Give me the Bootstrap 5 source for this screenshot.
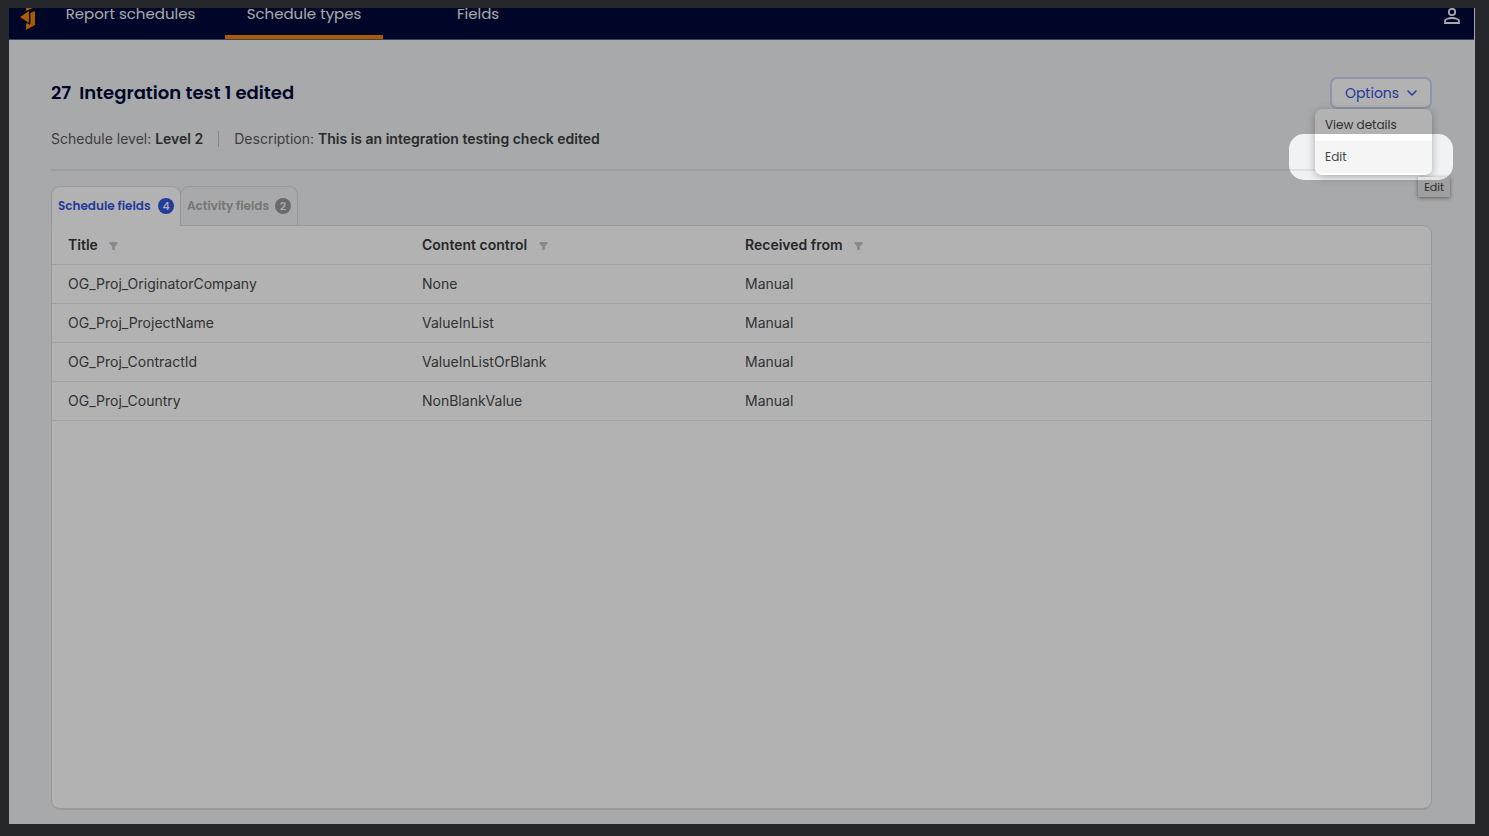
<!DOCTYPE html>
<html lang="en">
<head>
<meta charset="utf-8">
<meta name="viewport" content="width=device-width, initial-scale=1">
<title>Schedule types</title>
<link href="https://cdn.jsdelivr.net/npm/bootstrap@5.3.0/dist/css/bootstrap.min.css" rel="stylesheet">
<style>
  body { font-family: Inter, "Liberation Sans", sans-serif; font-size: 14px; line-height: 20px; color: #393a3c; background: #26272b; height: 100vh; padding: 8px 14px 12px 9px; }
  .app-frame { background: #f0f2f5; overflow: hidden; }
  .geo { font-family: Poppins, Inter, "Liberation Sans", sans-serif; }
  .topbar { background: #000a38; border-bottom: 1px solid #5a6280; margin-right: 1px; padding: 0 14px 0 11px; }
  .topbar .nav-link { color: #f0f2f5; font-size: 15px; line-height: 12px; height: 31px; padding: 0; border-bottom: 4px solid transparent; text-align: center; width: 158px; }
  .topbar .nav-link.active { border-bottom-color: #f08500; }
  .topbar .nav-link.first { width: 189px; }
  .topbar .nav-link.last { width: 190px; }
  .page-body { padding: 37px 43px 14px 42px; }
  h1 { font-size: 18px; line-height: 28px; font-weight: 600; color: #000a38; }
  .btn-options { height: 32px; width: 102px; padding: 0; border: 2px solid #ccd5fa; border-radius: 7px; background: #fff; color: #3355e0; font-size: 14px; line-height: 20px; font-weight: 400; }
  .btn-options:hover { background: #fff; color: #3355e0; border-color: #ccd5fa; }
  .options-menu { position: absolute; top: 32px; right: 0; width: 117px; min-width: 0; padding: 0 0 2px; border: 0; border-radius: 7px; background: #fff; overflow: hidden; box-shadow: 0 2px 8px rgba(0,0,0,.3); z-index: 2; }
  .options-menu .dropdown-item { font-size: 12px; line-height: 32px; padding: 0 10px; color: #444; }
  .options-menu .dropdown-item.hovered { background: #f5f5f5; }
  .hint { position: absolute; top: 100px; right: -18px; padding: 0 6px; font-size: 11px; line-height: 20px; color: #444; background: #e4e4e4; box-shadow: 0 1px 4px rgba(0,0,0,.45); z-index: 3; }
  .spotlight { position: absolute; top: 57px; right: -21px; width: 164px; height: 46px; border-radius: 15px; box-shadow: 0 0 0 3000px rgba(0,0,0,.3); pointer-events: none; z-index: 4; }
  .details { color: #59595c; margin-top: 20px; padding-bottom: 20px; border-bottom: 2px solid #dfe0e3; }
  .details strong { font-weight: 600; color: #3c3d40; }
  .details .first { padding-right: 15px; margin-right: 15px; border-right: 1px solid #bfc1c6; line-height: 16px; }
  .field-tabs { margin-top: 15px; margin-bottom: -1px; position: relative; z-index: 1; }
  .field-tabs .nav-link { height: 40px; border: 1px solid #d6d7db; border-bottom-color: #d9dadd; border-radius: 9px 9px 0 0; padding: 0 6px; font-size: 12px; font-weight: 600; color: #aaa; white-space: nowrap; }
  .field-tabs .nav-link.active { background: #fff; color: #3355e0; border-bottom-color: #fff; }
  .field-tabs .first-tab { width: 130px; }
  .field-tabs .second-tab { width: 118px; margin-left: -1px; }
  .count { width: 16px; height: 16px; border-radius: 50%; background: #999; color: #fff; font-size: 11px; line-height: 16px; text-align: center; font-weight: 500; }
  .active .count { background: #3355e0; }
  .panel { background: #fff; border: 1px solid #d9dadd; border-bottom-width: 2px; border-radius: 0 9px 9px 9px; }
  .panel .table { --bs-table-bg: transparent; --bs-table-color: #48494b; table-layout: fixed; color: #48494b; border-color: #e9e9ea; margin: 0; }
  .panel th, .panel td { height: 39px; padding: 0 16px; vertical-align: middle; }
  .panel th { height: 38px; font-weight: 600; color: #38393b; }
  .panel .btn-filter { border: 0; padding: 0; margin-left: 8px; line-height: 1; color: #c4c4c6; background: none; }
  .col-title { width: 354px; }
  .col-control { width: 323px; }
</style>
</head>
<body>
<div class="app-frame h-100 d-flex flex-column">
  <header class="topbar d-flex align-items-start justify-content-between flex-shrink-0 geo">
    <div class="d-flex">
      <a href="#" aria-label="Home" class="d-block lh-1">
        <svg width="16" height="23" viewBox="0 0 16 23" fill="#f08500"><path d="M6 0h7L6 3zM15 3v14l-9 5v-6l1-1 3 2V5zM0 9l9-6v12z"/><path d="M10 5v11" stroke="#000a38" stroke-width=".8"/></svg>
      </a>
      <nav class="nav flex-nowrap" aria-label="Main">
        <a class="nav-link first" href="#">Report schedules</a>
        <a class="nav-link active" href="#" aria-current="page">Schedule types</a>
        <a class="nav-link last" href="#">Fields</a>
      </nav>
    </div>
    <button type="button" class="btn p-0 border-0 lh-1 d-flex" aria-label="Account">
      <svg width="16" height="17" viewBox="0 0 16 17" fill="none" stroke="#f0f2f5" stroke-width="1.8"><circle cx="8" cy="4" r="3.2"/><path d="M1 15v-2c0-2 4-3 7-3s7 1 7 3v2z"/></svg>
    </button>
  </header>
  <main class="page-body d-flex flex-column flex-grow-1">
    <div class="d-flex justify-content-between align-items-center">
      <h1 class="geo m-0 d-flex gap-2"><span>27</span><span>Integration test 1 edited</span></h1>
      <div class="dropdown geo">
        <button type="button" class="btn btn-options d-flex align-items-center justify-content-center gap-2" aria-expanded="true">Options
          <svg width="10" height="6" viewBox="0 0 10 6" fill="none" stroke="currentColor" stroke-width="1.5" stroke-linecap="round" stroke-linejoin="round"><path d="M1 1l4 4 4-4"/></svg>
        </button>
        <div class="dropdown-menu options-menu show">
          <a class="dropdown-item" href="#">View details</a>
          <a class="dropdown-item hovered" href="#">Edit</a>
        </div>
        <div class="hint" role="tooltip">Edit</div>
        <div class="spotlight"></div>
      </div>
    </div>
    <div class="details d-flex align-items-center">
      <div class="first">Schedule level: <strong>Level 2</strong></div>
      <div>Description: <strong>This is an integration testing check edited</strong></div>
    </div>
    <nav class="nav field-tabs geo" aria-label="Field groups">
      <a class="nav-link active first-tab d-flex align-items-center justify-content-between" href="#">Schedule fields <span class="count">4</span></a>
      <a class="nav-link second-tab d-flex align-items-center justify-content-between" href="#">Activity fields <span class="count">2</span></a>
    </nav>
    <section class="panel flex-grow-1">
      <table class="table">
        <thead>
          <tr>
            <th scope="col" class="col-title">Title <button type="button" class="btn-filter" aria-label="Filter title"><svg width="9" height="8" viewBox="0 0 9 9" fill="currentColor"><path d="M0 0h9v2L6 5v4H3V5L0 2z"/></svg></button></th>
            <th scope="col" class="col-control">Content control <button type="button" class="btn-filter" aria-label="Filter content control"><svg width="9" height="8" viewBox="0 0 9 9" fill="currentColor"><path d="M0 0h9v2L6 5v4H3V5L0 2z"/></svg></button></th>
            <th scope="col">Received from <button type="button" class="btn-filter" aria-label="Filter received from"><svg width="9" height="8" viewBox="0 0 9 9" fill="currentColor"><path d="M0 0h9v2L6 5v4H3V5L0 2z"/></svg></button></th>
          </tr>
        </thead>
        <tbody>
          <tr><td>OG_Proj_OriginatorCompany</td><td>None</td><td>Manual</td></tr>
          <tr><td>OG_Proj_ProjectName</td><td>ValueInList</td><td>Manual</td></tr>
          <tr><td>OG_Proj_ContractId</td><td>ValueInListOrBlank</td><td>Manual</td></tr>
          <tr><td>OG_Proj_Country</td><td>NonBlankValue</td><td>Manual</td></tr>
        </tbody>
      </table>
    </section>
  </main>
</div>
<script src="https://cdn.jsdelivr.net/npm/bootstrap@5.3.0/dist/js/bootstrap.bundle.min.js"></script>
</body>
</html>
